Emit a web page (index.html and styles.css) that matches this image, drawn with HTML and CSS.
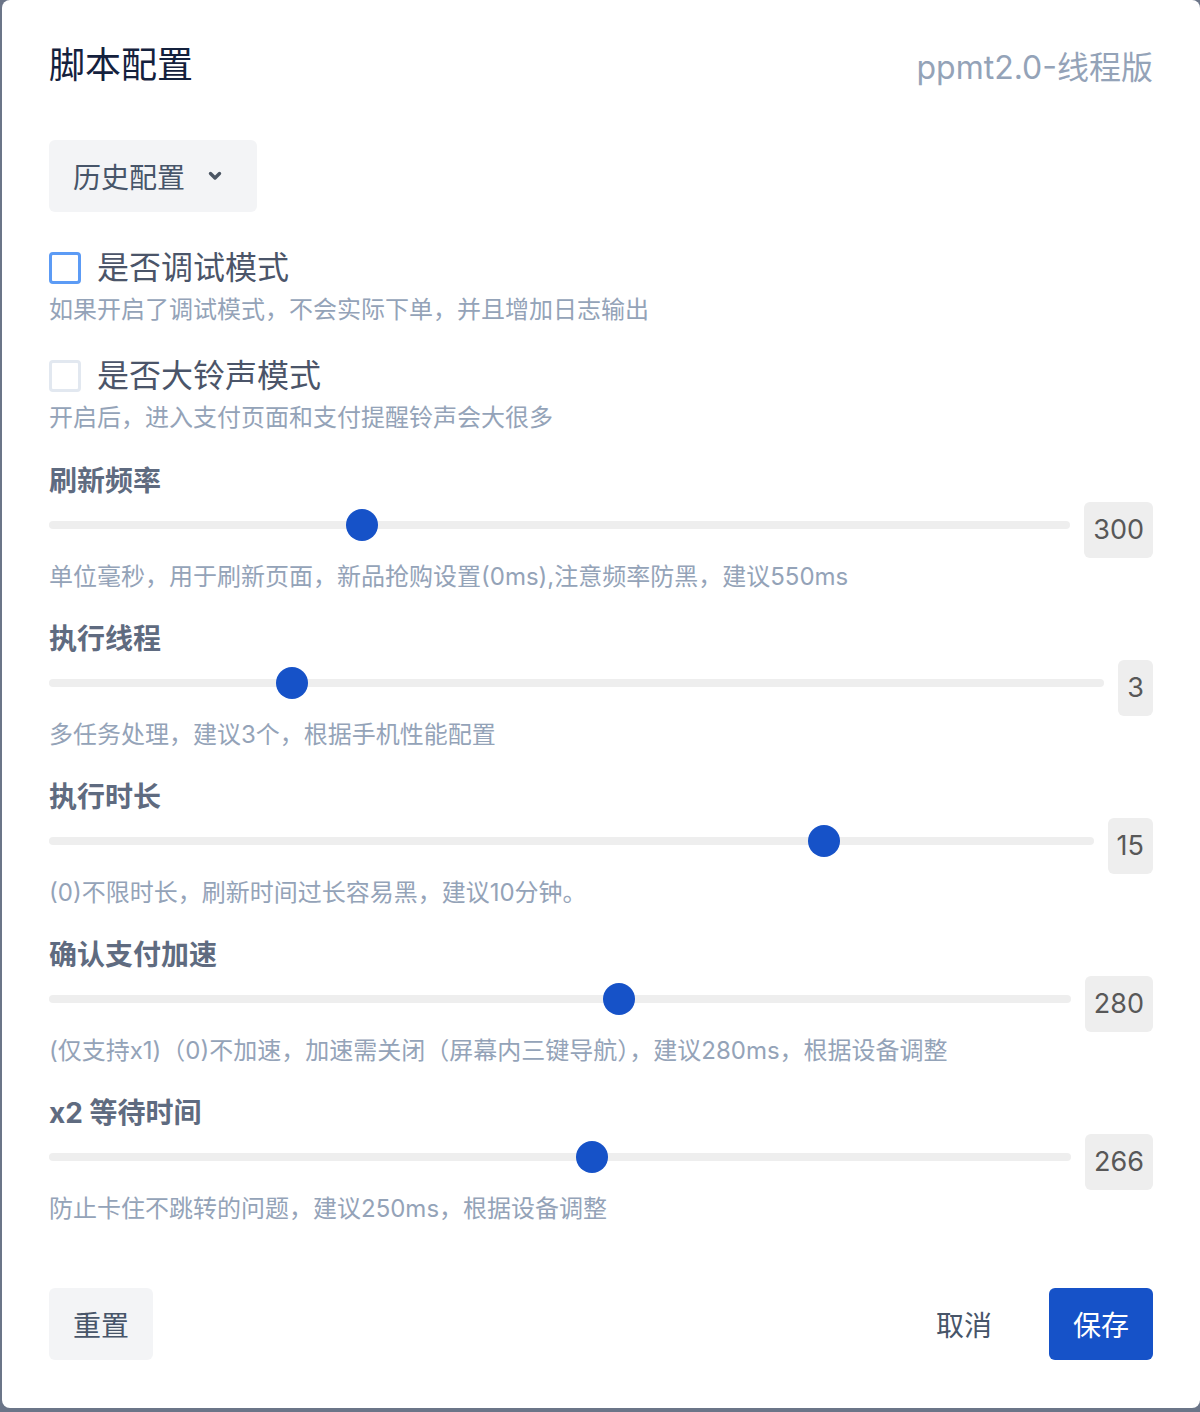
FILE: index.html
```html
<!DOCTYPE html>
<html lang="zh-CN">
<head>
<title>脚本配置</title>
<meta charset="UTF-8">
<meta name="viewport" content="width=device-width, initial-scale=1.0">
<link rel="stylesheet" href="styles.css">
</head>
<body>

<div class="dialog">
  <div class="dialog-header">
    <h2 class="dialog-title">脚本配置</h2>
    <span class="version">ppmt2.0-线程版</span>
  </div>

  <button class="history-btn">
    历史配置
    <svg class="chevron" width="16" height="12" viewBox="0 0 16 12"><path d="M3.5 3.5 L8 8 L12.5 3.5" fill="none" stroke="#4b5563" stroke-width="3.4" stroke-linecap="round" stroke-linejoin="round"/></svg>
  </button>

  <div class="check-item first">
    <label class="check-row">
      <span class="checkbox focused"></span>
      <span class="check-label">是否调试模式</span>
    </label>
    <p class="hint">如果开启了调试模式，不会实际下单，并且增加日志输出</p>
  </div>

  <div class="check-item">
    <label class="check-row">
      <span class="checkbox"></span>
      <span class="check-label">是否大铃声模式</span>
    </label>
    <p class="hint">开启后，进入支付页面和支付提醒铃声会大很多</p>
  </div>

  <div class="field">
    <div class="field-label">刷新频率</div>
    <div class="slider-row">
      <input type="range" class="slider" min="0" max="1000" value="300">
      <span class="slider-value">300</span>
    </div>
    <p class="hint">单位毫秒，用于刷新页面，新品抢购设置(0ms),注意频率防黑，建议550ms</p>
  </div>

  <div class="field">
    <div class="field-label">执行线程</div>
    <div class="slider-row">
      <input type="range" class="slider" min="1" max="10" value="3">
      <span class="slider-value">3</span>
    </div>
    <p class="hint">多任务处理，建议3个，根据手机性能配置</p>
  </div>

  <div class="field">
    <div class="field-label">执行时长</div>
    <div class="slider-row">
      <input type="range" class="slider" min="0" max="20" value="15">
      <span class="slider-value">15</span>
    </div>
    <p class="hint">(0)不限时长，刷新时间过长容易黑，建议10分钟。</p>
  </div>

  <div class="field">
    <div class="field-label">确认支付加速</div>
    <div class="slider-row">
      <input type="range" class="slider" min="0" max="500" value="280">
      <span class="slider-value">280</span>
    </div>
    <p class="hint">(仅支持x1)（0)不加速，加速需关闭（屏幕内三键导航），建议280ms，根据设备调整</p>
  </div>

  <div class="field">
    <div class="field-label">x2 等待时间</div>
    <div class="slider-row">
      <input type="range" class="slider" min="0" max="500" value="266">
      <span class="slider-value">266</span>
    </div>
    <p class="hint">防止卡住不跳转的问题，建议250ms，根据设备调整</p>
  </div>

  <div class="dialog-footer">
    <button class="btn btn-light">重置</button>
    <div class="footer-right">
      <button class="btn btn-text">取消</button>
      <button class="btn btn-primary">保存</button>
    </div>
  </div>
</div>

</body>
</html>
```

FILE: styles.css
```css
html, body {
  margin: 0;
  padding: 0;
}

body {
  background: #6b7588;
  font-family: Inter, "Noto Sans CJK SC", sans-serif;
  overflow: hidden;
}

.dialog {
  box-sizing: border-box;
  margin-left: 2px;
  width: 1198px;
  height: 1408px;
  background: #fff;
  border-radius: 8px;
  padding: 40px 47px 0 47px;
}

.dialog-header {
  display: flex;
  justify-content: space-between;
  align-items: center;
  height: 50px;
}

.dialog-title {
  margin: 0;
  font-size: 36px;
  font-weight: 400;
  color: #14213d;
  line-height: 50px;
}

.version {
  font-size: 32px;
  color: #94a3b8;
}

.history-btn {
  margin-top: 50px;
  height: 72px;
  width: 208px;
  display: flex;
  align-items: center;
  gap: 22px;
  padding: 0 0 0 24px;
  border: none;
  border-radius: 6px;
  background: #f3f4f6;
  font-family: inherit;
  font-size: 28px;
  color: #475569;
}

.check-item {
  margin-top: 30px;
}

.check-item.first {
  margin-top: 36px;
}

.check-row {
  display: flex;
  align-items: center;
  gap: 16px;
  height: 40px;
}

.checkbox {
  box-sizing: border-box;
  width: 32px;
  height: 32px;
  border: 3px solid #e2e8f0;
  border-radius: 4px;
}

.checkbox.focused {
  border-color: #5c9bf5;
}

.check-label {
  font-size: 32px;
  color: #4b5569;
  line-height: 40px;
}

.hint {
  margin: 6px 0 0;
  font-size: 24px;
  line-height: 32px;
  color: #94a3b8;
}

.field {
  margin-top: 27px;
}

.field + .field {
  margin-top: 26px;
}

.field-label {
  font-size: 28px;
  font-weight: 700;
  line-height: 40px;
  color: #5f6b80;
}

.slider-row {
  display: flex;
  align-items: flex-start;
  gap: 14px;
  margin-top: 1px;
  height: 56px;
}

.field .hint {
  margin-top: 3px;
}

.slider {
  -webkit-appearance: none;
  appearance: none;
  flex: 1;
  margin: 7px 0 0;
  height: 32px;
  background: transparent;
}

.slider::-webkit-slider-runnable-track {
  height: 8px;
  border-radius: 4px;
  background: #eeeeee;
}

.slider::-webkit-slider-thumb {
  -webkit-appearance: none;
  width: 32px;
  height: 32px;
  margin-top: -12px;
  border-radius: 50%;
  background: #1652c8;
  border: none;
}

.slider-value {
  box-sizing: border-box;
  height: 56px;
  padding: 0 9px;
  border-radius: 6px;
  background: #eeeeee;
  font-size: 27px;
  line-height: 56px;
  color: #585858;
}

.dialog-footer {
  margin-top: 63px;
  display: flex;
  justify-content: space-between;
  align-items: center;
}

.footer-right {
  display: flex;
  gap: 33px;
}

.btn {
  height: 72px;
  padding: 0 24px;
  border: none;
  border-radius: 6px;
  font-family: inherit;
  font-size: 28px;
}

.btn-light {
  background: #f3f4f6;
  color: #475569;
}

.btn-text {
  background: none;
  color: #475569;
}

.btn-primary {
  background: #1652c8;
  color: #fff;
}
```
